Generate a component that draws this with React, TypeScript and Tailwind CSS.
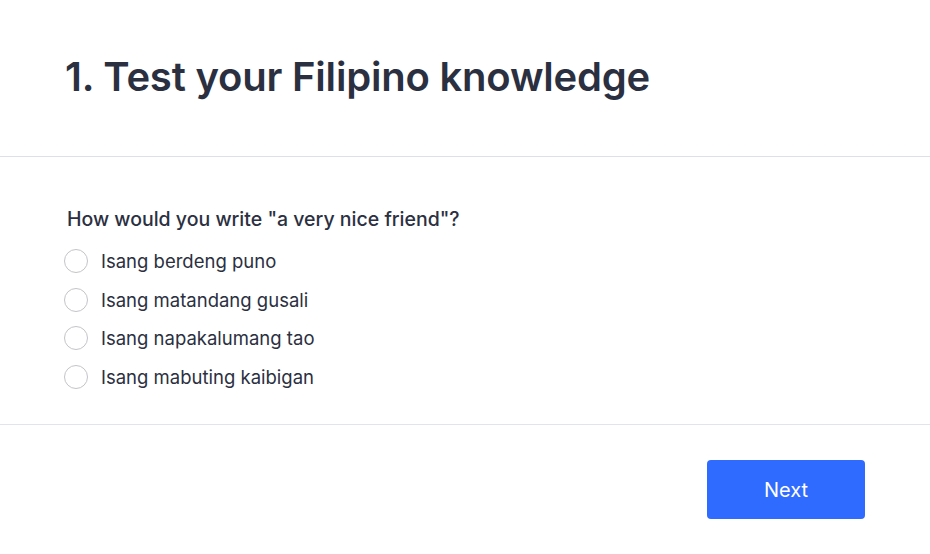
import { useState } from 'react';

const options = [
  'Isang berdeng puno',
  'Isang matandang gusali',
  'Isang napakalumang tao',
  'Isang mabuting kaibigan',
];

function App() {
  const [picked, setPicked] = useState<number | null>(null);

  return (
    <div className="w-[930px] h-[554px] bg-white text-[#2b3041] flex flex-col" style={{ fontFamily: 'Inter, "Noto Sans", sans-serif' }}>
      <div className="h-[157px] shrink-0 flex items-center px-[65px] border-b border-[#dfdfea]">
        <h1 className="text-[40px] font-semibold tracking-[-0.2px] leading-none pb-[2px]">1. Test your Filipino knowledge</h1>
      </div>
      <div className="h-[268px] shrink-0 border-b border-[#e3e3ec] pl-[64px] pt-[50px]">
        <p className="text-[19.5px] font-medium leading-[24px] pl-[3px]">How would you write "a very nice friend"?</p>
        <div className="mt-[11px] flex flex-col">
          {options.map((o, i) => (
            <label key={o} className="flex items-center h-[38.5px] cursor-pointer" onClick={() => setPicked(i)}>
              <span className="w-[24px] h-[24px] rounded-full border border-[#c4c4c8] bg-white flex items-center justify-center">
                {picked === i && <span className="w-[12px] h-[12px] rounded-full bg-[#2f6bff]" />}
              </span>
              <span className="ml-[13px] text-[18.5px] leading-none">{o}</span>
            </label>
          ))}
        </div>
      </div>
      <div className="flex-1 flex justify-end items-start pt-[35px] pr-[65px]">
        <button type="button" className="w-[158px] h-[59px] rounded-[4px] bg-[#2f6bff] text-white text-[20px] font-normal pt-[1px]">
          Next
        </button>
      </div>
    </div>
  );
}

export default App;
